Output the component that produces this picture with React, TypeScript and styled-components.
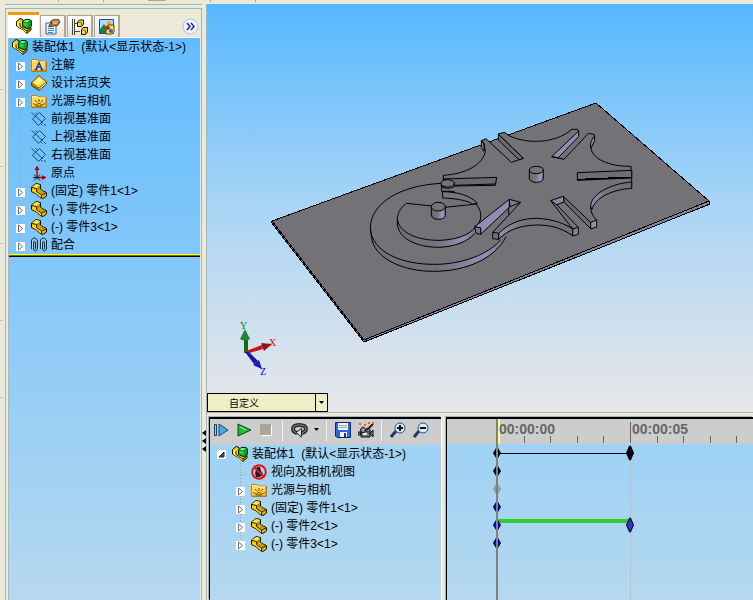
import React from "react";
import styled, { createGlobalStyle } from "styled-components";

const GlobalStyle = createGlobalStyle`
  * { box-sizing: border-box; }
  body {
    margin: 0;
    background: #ece9d8;
    color: #000;
    font: 12px/18px "Liberation Sans", "Noto Sans CJK SC", sans-serif;
  }
  button { padding: 0; border: 0; background: none; font: inherit; color: inherit; }
  svg { display: block; }
`;

/* ---------- layout ---------- */

const Window = styled.div`
  height: 100vh;
  display: flex;
  flex-direction: column;
  overflow: hidden;
`;

const TopStrip = styled.div`
  flex: 0 0 4px;
  display: flex;
  gap: 44px;
  padding-left: 58px;
`;

const StripMark = styled.i<{ $wide?: boolean }>`
  height: ${(p) => (p.$wide ? 1 : 2)}px;
  width: ${(p) => (p.$wide ? 18 : 1)}px;
  background: #aca899;
`;

const Body = styled.div`
  flex: 1;
  min-height: 0;
  display: flex;
`;

const Gutter = styled.div`
  flex: 0 0 5px;
  display: flex;
  flex-direction: column;
  gap: 76px;
  padding: 85px 2px 0 0;
`;

const GutterMark = styled.i`
  height: 1px;
  background: #c4c0b0;
`;

const SidePanel = styled.aside`
  flex: 0 0 197px;
  display: flex;
  flex-direction: column;
  border-top: 1px solid #9cb6ba;
  padding-top: 3px;
`;

const SideFrame = styled.div`
  flex: 1;
  display: flex;
  flex-direction: column;
  border: 1px solid #9cb6ba;
  border-bottom: 0;
  padding: 3px 1px 0 2px;
`;

const Tabs = styled.div`
  flex: 0 0 26px;
  display: flex;
  align-items: flex-end;
  gap: 1px;
  border-bottom: 1px solid #fff;
`;

const Tab = styled.button<{ $active?: boolean }>`
  width: ${(p) => (p.$active ? 31 : 26)}px;
  height: ${(p) => (p.$active ? 25 : 22)}px;
  display: flex;
  justify-content: center;
  align-items: center;
  background: ${(p) => (p.$active ? "#fff" : "linear-gradient(#fff, #e6e3d6)")};
  border: 1px solid #aca899;
  border-width: ${(p) => (p.$active ? "0" : "1px 2px 0 1px")};
  border-top: ${(p) => (p.$active ? "3px solid #ee9a10" : "1px solid #aca899")};
`;

const MoreButton = styled.button`
  margin: 0 1px 2px auto;
`;

const SideBody = styled.div`
  flex: 1;
  background: linear-gradient(#62bcff, #b6d8ef);
  border-left: 1px solid #a8b8c0;
`;

const Tree = styled.ul`
  list-style: none;
  margin: 0;
  padding: 0;
`;

const RollbackBar = styled.div`
  height: 3px;
  background: #776f00;
  border-top: 1px solid #ffff00;
  border-bottom: 1px solid #000;
`;

const Row = styled.li<{ $indent: number }>`
  height: 18px;
  display: flex;
  align-items: center;
  gap: 4px;
  padding-left: ${(p) => p.$indent}px;
  white-space: pre;
`;

const Branch = styled.div<{ $last?: boolean }>`
  align-self: stretch;
  width: 11px;
  display: flex;
  align-items: center;
  padding-top: 3px;
  background:
    repeating-linear-gradient(90deg, #a99d90 0 1px, transparent 1px 3px) 5px 11px / 10px 1px no-repeat,
    repeating-linear-gradient(#a99d90 0 1px, transparent 1px 3px) 4px 0 / 1px ${(p) => (p.$last ? "11px" : "18px")} no-repeat;
`;

const Expander = styled.button<{ $root?: boolean }>`
  width: 9px;
  height: 9px;
  margin-right: ${(p) => (p.$root ? 2 : 0)}px;
  background: #fff;
`;

const Splitter = styled.div`
  flex: 0 0 5px;
  display: flex;
  flex-direction: column;
  align-items: center;
  justify-content: flex-end;
  gap: 2px;
  padding-bottom: 148px;
  border-right: 1px solid #9cb6ba;
`;

const Main = styled.main`
  flex: 1;
  min-width: 0;
  display: flex;
  flex-direction: column;
`;

const Viewport = styled.section`
  flex: 1;
  min-height: 0;
  position: relative;
  background: linear-gradient(#56b8ff, #aad5f5 50%, #e8e7e8);
`;

const Scene = styled.svg`
  width: 100%;
  height: 100%;
`;

const ViewPicker = styled.label`
  position: absolute;
  left: 0;
  bottom: 0;
  display: flex;
  align-items: stretch;
  width: 121px;
  height: 19px;
  background: #efefc6;
  border: 1px solid #000;
  svg { border-left: 1px solid #000; }
`;

const Select = styled.select`
  flex: 1;
  appearance: none;
  border: 0;
  padding: 0 0 0 21px;
  background: transparent;
  color: #000;
  font: 10px/17px "Noto Sans CJK SC", sans-serif;
`;

const MotionPanel = styled.section`
  flex: 0 0 188px;
  display: flex;
  gap: 5px;
  padding-top: 2px;
  border-top: 1px solid #9cb6ba;
`;

const MotionPane = styled.div<{ $grow?: boolean }>`
  flex: ${(p) => (p.$grow ? "1 1 0" : "0 0 232px")};
  min-width: 0;
  display: flex;
  flex-direction: column;
  margin-top: 2px;
  margin-left: ${(p) => (p.$grow ? "0" : "2px")};
  border: 2px solid #000;
  border-width: 2px 0 0 1px;
  box-shadow: -1px -1px #9cb6ba, ${(p) => (p.$grow ? "-1px 0 #888" : "1px 0 #fff")};
  background: linear-gradient(#9bd1f5, #b5d8ef);
`;

const Toolbar = styled.div`
  flex: 0 0 26px;
  display: flex;
  align-items: center;
  background: #cdcdcd;
  padding: 0 0 4px 4px;
`;

const ToolButton = styled.button<{ $width?: number }>`
  width: ${(p) => p.$width ?? 23}px;
  height: 22px;
  display: flex;
  align-items: center;
`;

const Separator = styled.i`
  width: 1px;
  height: 21px;
  margin-right: 8px;
  background: #f2f2f2;
`;

const ChartText = styled.text`
  font: bold 14px "Liberation Sans", sans-serif;
  fill: #666;
`;

const AxisText = styled.text`
  font: 10px "Liberation Serif", serif;
`;

/* ---------- icons ---------- */

const Icon = styled.svg.attrs({ width: 16, height: 16, viewBox: "0 0 16 16" })`
  flex: none;
`;

const PartIcon = () => (
  <Icon>
    <path d="M0.500 4L5 0.500L9.500 1.500V6L11 7.500L15.500 9.500V13L12 15.500L9 14.500L5.500 11L0.500 8.500Z" fill="#e2b400" stroke="#171300" />
    <path d="M1 4L5 1L9 2L5.500 5Z" fill="#ffec52" />
    <path d="M6 5L9 2.500V6L6 8.500Z" fill="#b98800" />
    <path d="M1 5L5 6V8.500L10 12V14.500L6 11L1 8Z" fill="#ffcf00" />
    <path d="M1 4.500L5.500 5.500V8.500L10.500 12V15M10.500 12L15 10" fill="none" stroke="#2f2400" />
    <path d="M7 8.500L10 7.500L14 9.500L11 11Z" fill="#c99520" />
  </Icon>
);

const AssemblyIcon = () => (
  <Icon>
    <path d="M0.500 3.500L4 0.500L7 1.500V6L15 9.500V12L11 15.500L7 12L0.500 8Z" fill="#efcc22" stroke="#161200" />
    <path d="M1 4L4 5V8L10.500 12.500V15L6.500 11.500L1 8Z" fill="#fff43b" />
    <path d="M4 5V8.500L11 13V15M11 13L15 10" fill="none" stroke="#2f2600" />
    <path d="M6.500 4L9 1.500H14L15.500 3V8L12.500 11L6.500 8.500Z" fill="#0f9a2b" stroke="#04260a" />
    <path d="M7.500 4L9.500 2H13.500L12 4Z" fill="#5dff70" />
    <path d="M7.500 5H11.500V9L7.500 7.500Z" fill="#2fcf45" />
    <path d="M11 13.500L14.500 10.500V12L11.500 15Z" fill="#8b6c0b" />
  </Icon>
);

const Folder = () => (
  <>
    <path d="M0.500 2.500H6L7.500 4H15.500V14.500H0.500Z" fill="#ffd75a" stroke="#c08611" />
    <path d="M1.500 5V3.500H5.500L7 5H14.500" fill="none" stroke="#fff5a5" />
    <path d="M15 5V14H1" fill="none" stroke="#a86f07" />
  </>
);

const AnnotationIcon = () => (
  <Icon>
    <Folder />
    <path d="M5 12.500L8 5.500L11 12.500M6 10H10M3.500 12.500H6.500M9.500 12.500H12.500" fill="none" stroke="#123ca0" strokeWidth="1.400" />
  </Icon>
);

const LightsIcon = () => (
  <Icon>
    <Folder />
    <path d="M5.500 13A2.500 2.500 0 0 1 10.500 13Z" fill="#ffe500" stroke="#7a4300" />
    <path d="M8 6V9M4 7L6 9.500M12 7L10 9.500M2 10.500L5 12M14 10.500L11 12" stroke="#7a4300" />
  </Icon>
);

const BinderIcon = () => (
  <Icon>
    <path d="M0.500 8L8 0.500L15.500 7V9L8 15.500L0.500 10.500Z" fill="#b98000" stroke="#4d3700" />
    <path d="M0.500 8L8 0.500L15.500 7L8 13Z" fill="#ffd840" stroke="#8a6500" />
    <path d="M3 7.500L8 2.500L12 6L7 10Z" fill="#fff39b" />
    <path d="M8.500 14L15 8.500" stroke="#fff" />
  </Icon>
);

const PlaneIcon = () => (
  <Icon>
    <path d="M1.500 8L8.500 1.500L14.500 7.500L7.500 14.500ZM0.500 1.500L12 12M4.500 1.500L6 3M10 13L11.500 14.500M13 13L15 15" fill="none" stroke="#1d4a70" />
  </Icon>
);

const OriginIcon = () => (
  <Icon>
    <path d="M6 13V2M6 12.500H14" stroke="#b70000" strokeWidth="1.500" />
    <path d="M3.500 5L6 0.500L8.500 5ZM11 10V15L15.500 12.500Z" fill="#b70000" />
    <path d="M3 9.500L9 15.500M3 15.500L9 9.500M2 12.500H9" stroke="#1d1d28" />
  </Icon>
);

const MatesIcon = () => (
  <Icon>
    <g fill="none" stroke="#222a30">
      <path d="M0.500 12V3Q3 -1 6.500 3V12Q4 16 2.500 12V5Q4 3 4.500 6V12" />
      <path d="M9.500 12V3Q12 -1 15.500 3V12Q13 16 11.500 12V5Q13 3 13.500 6V12" />
    </g>
    <path d="M1.500 4V11M10.500 4V11" stroke="#c7d3da" />
  </Icon>
);

const NoViewIcon = () => (
  <Icon>
    <path d="M6 3L9 3L10 7L12 10L9 13H5L4 9Z" fill="#17202a" />
    <circle cx="8" cy="8" r="6.800" fill="none" stroke="#ec1111" strokeWidth="2" />
    <path d="M3 3L13 13" stroke="#ec1111" strokeWidth="2" />
  </Icon>
);

const PropertyIcon = () => (
  <Icon>
    <path d="M1 4H11V15H1Z" fill="#e5f3ff" stroke="#34679a" />
    <path d="M3 7.500H9M3 9.500H9M3 11.500H9M3 13.500H8" stroke="#3e82c4" />
    <path d="M5 3L9 0H13L15 3L12 7L8 6L5 8L4 6L7 4Z" fill="#bd7b4c" stroke="#653513" />
    <path d="M8 3H13M8 5L12 4" stroke="#f1c093" />
  </Icon>
);

const ConfigIcon = () => (
  <Icon>
    <path d="M0.500 0V16M2.500 0V16M3 4.500H6M3 12.500H8" stroke="#444" />
    <path d="M5.500 3L7.500 1H11.500V5L9.500 7.500H5.500ZM9.500 10.500L11 8.500H15.500V13L13.500 15.500H9.500Z" fill="#ffdc22" stroke="#161200" />
    <path d="M6 3.500H9.500V7M10 11H13.500V15" fill="none" stroke="#906900" />
  </Icon>
);

const AppearanceIcon = () => (
  <Icon>
    <path d="M0.500 0.500H14.500V14.500H0.500Z" fill="#a9dcff" stroke="#244b91" />
    <path d="M1 13V10L5 5L10 12V14H1Z" fill="#188641" />
    <circle cx="10" cy="4" r="2" fill="#ff9a12" />
    <path d="M7 8L9 6H15V13L13 15H7Z" fill="#ffe23a" stroke="#594400" />
    <circle cx="9" cy="9" r="2" fill="#df1515" />
    <circle cx="12" cy="12" r="2" fill="#2865db" />
  </Icon>
);

const icons = {
  part: PartIcon,
  assembly: AssemblyIcon,
  annotation: AnnotationIcon,
  lights: LightsIcon,
  binder: BinderIcon,
  plane: PlaneIcon,
  origin: OriginIcon,
  mates: MatesIcon,
  noView: NoViewIcon,
};

/* ---------- trees ---------- */

type Node = { icon: keyof typeof icons; label: string; leaf?: boolean };

const ROOT_LABEL = "装配体1  (默认<显示状态-1>)";

const designNodes: Node[] = [
  { icon: "annotation", label: "注解" },
  { icon: "binder", label: "设计活页夹" },
  { icon: "lights", label: "光源与相机" },
  { icon: "plane", label: "前视基准面", leaf: true },
  { icon: "plane", label: "上视基准面", leaf: true },
  { icon: "plane", label: "右视基准面", leaf: true },
  { icon: "origin", label: "原点", leaf: true },
  { icon: "part", label: "(固定) 零件1<1>" },
  { icon: "part", label: "(-) 零件2<1>" },
  { icon: "part", label: "(-) 零件3<1>" },
  { icon: "mates", label: "配合" },
];

const motionNodes: Node[] = [
  { icon: "noView", label: "视向及相机视图", leaf: true },
  { icon: "lights", label: "光源与相机" },
  { icon: "part", label: "(固定) 零件1<1>" },
  { icon: "part", label: "(-) 零件2<1>" },
  { icon: "part", label: "(-) 零件3<1>" },
];

const TreeRows = ({ nodes, indent }: { nodes: Node[]; indent: number }) => (
  <>
    {nodes.map((n, i) => {
      const Glyph = icons[n.icon];
      return (
        <Row key={i} $indent={indent} role="treeitem">
          <Branch $last={i === nodes.length - 1}>
            {!n.leaf && (
              <Expander aria-label={`展开 ${n.label}`}>
                <svg width="9" height="9">
                  <path d="M2.500 1L6.500 4.500L2.500 8Z" fill="#fff" stroke="#707070" />
                </svg>
              </Expander>
            )}
          </Branch>
          <Glyph />
          <span>{n.label}</span>
        </Row>
      );
    })}
  </>
);

/* ---------- 3D scene ---------- */

const Mechanism = () => (
  <Scene viewBox="207 4 546 408" preserveAspectRatio="xMidYMid meet" role="img" aria-label="槽轮机构">
    <defs>
      <linearGradient id="rim">
        <stop offset="0" stopColor="#707074" />
        <stop offset="0.500" stopColor="#737279" />
        <stop offset="0.850" stopColor="#9290b8" />
        <stop offset="1" stopColor="#757480" />
      </linearGradient>
      <linearGradient id="pin">
        <stop offset="0" stopColor="#68686c" />
        <stop offset="0.450" stopColor="#77767e" />
        <stop offset="0.800" stopColor="#9c9ac4" />
        <stop offset="1" stopColor="#78778a" />
      </linearGradient>
      <linearGradient id="arch">
        <stop offset="0" stopColor="#9290b8" />
        <stop offset="0.350" stopColor="#75747d" />
        <stop offset="1" stopColor="#706f73" />
      </linearGradient>
    </defs>
    <g shapeRendering="crispEdges" stroke="#000" strokeLinejoin="round">
      <path d="M272 221L364 340L709 201L710 204L364 342L271 222Z" fill="#85839a" />
      <path d="M272 221L596 103L709 201L364 340Z" fill="#737276" />
    </g>

    {/* driver disk with locking arc and crank pin */}
    <g transform="translate(260 90) scale(0.333333)" shapeRendering="crispEdges" stroke="#000" strokeWidth="3" fill="none" strokeLinejoin="round">
      <path d="M331 415C335 486 425 524 525 523C610 523 690 490 722 449L738 440C705 505 620 544 520 544C435 544 350 510 336 450Z" fill="url(#rim)" stroke="none" />
      <path d="M545 280C420 286 331 340 331 415C335 486 425 524 525 523C610 523 690 490 722 449" />
      <path d="M331 415L336 450C350 510 435 544 520 544C620 544 705 505 738 440" />
      <path d="M412 388C418 430 475 451 537 451C585 450 625 437 645 413V431C622 455 585 470 537 472C480 472 420 452 412 405Z" fill="url(#rim)" stroke="none" />
      <path d="M440 340C418 354 412 375 412 388C418 430 475 451 537 451C585 450 625 437 645 413M662 370C664 385 660 395 651 407M412 388V405C420 452 480 472 537 472C585 470 622 455 644 431" />
      <path d="M440 340L515 348M555 352L650 342" />
      <path d="M548 305C600 307 655 330 662 370" />
      <path d="M548 305V324C580 325 620 330 638 342L652 340C630 315 590 306 548 305Z" fill="#77767d" />
      <path d="M514 350V376C516 392 556 392 556 376V350Z" fill="url(#pin)" />
      <ellipse cx="535" cy="350" rx="21" ry="13" fill="#747377" />
      <path d="M550 267L710 262L706 286L583 288ZM583 286L706 282" fill="#6b6a6e" />
      <path d="M550 256V270M545 282V304H583" />
      <path d="M544 280V290Q563 300 583 290V280Z" fill="url(#pin)" />
      <ellipse cx="563" cy="280" rx="20" ry="11" fill="#747377" />
    </g>

    {/* six-slot Geneva wheel */}
    <g transform="translate(470 90) scale(0.333333)" shapeRendering="crispEdges" stroke="#000" strokeWidth="3" fill="none" strokeLinejoin="round">
      <path d="M34 152L48 146L88 184L60 200L46 184Z" fill="#737276" stroke="none" />
      <path d="M34 152L42 162V184L34 172Z" fill="#8886a2" />
      <path d="M-80 256C-10 252 40 222 46 184L42 160L34 152L48 146L124 217L160 205" />
      <path d="M85 132L160 205L147 209L85 150Z" fill="#6d6c70" />
      <path d="M85 132L103 127L117 137C170 163 255 160 300 122L306 118H322L326 123L200 190L130 176Z" fill="#737276" stroke="none" />
      <path d="M160 205L85 132L103 127L117 137C170 163 255 160 300 122L306 118H322L326 123" />
      <path d="M326 123V140L265 203L245 200Z" fill="#8f8db5" />
      <path d="M245 200L282 208L355 130L372 133L374 138" />
      <path d="M374 138V152L363 174Q357 158 374 138Z" fill="#8f8db5" />
      <path d="M363 174C366 205 415 230 483 229V240M485 240V295" />
      <path d="M322 248L485 241V264L322 271Z" fill="#6e6d70" />
      <path d="M322 269L485 262" strokeWidth="5" />
      <path d="M485 276C415 282 362 315 362 350L366 358C375 322 430 298 485 295Z" fill="url(#arch)" />
      <path d="M242 332L280 319L283 336L260 344Z" fill="#8a88aa" />
      <path d="M280 319L380 390L362 397V413L283 337Z" fill="#737276" stroke="none" />
      <path d="M280 319L362 397V416L283 337Z" fill="#6c6b6f" />
      <path d="M362 397L380 390V411L362 417Z" fill="#8f8db0" />
      <path d="M362 350Q362 374 380 390" />
      <path d="M242 332L308 417M260 344L325 412" />
      <path d="M308 417L325 412V433L308 438Z" fill="#85839e" />
      <path d="M86 430C120 396 160 385 200 385C255 387 290 405 308 417V437C270 411 235 405 200 405C145 407 115 420 86 447Z" fill="url(#arch)" />
      <path d="M152 337L68 427L86 430V448L68 446V427" />
      <path d="M118 328L14 410L32 414V433L118 352Z" fill="#8f8db5" />
      <path d="M118 328L152 337L120 350Z" fill="#7c7b88" />
      <path d="M14 410L32 414V433L18 430Z" fill="#77767d" />
      <path d="M116 352V374" />
      <path d="M178 240V266C182 281 216 281 220 266V240Z" fill="url(#pin)" />
      <ellipse cx="199" cy="240" rx="21" ry="11" fill="#747377" />
    </g>

    {/* orientation triad */}
    <path d="M244 336H248V353H244Z" fill="#146b1a" />
    <path d="M240 339L245 329L250 339Q245 342 240 339Z" fill="#218533" />
    <path d="M246 354L263 349L262 345L246 351Z" fill="#c51616" />
    <path d="M261 343L272 344L264 351Z" fill="#8f1717" />
    <path d="M245 352L249 352L258 361L254 364Z" fill="#1717a0" />
    <path d="M253 365L259 360L262 369Z" fill="#1616c9" />
    <AxisText x="240" y="329" fill="#087b18">Y</AxisText>
    <AxisText x="269" y="346" fill="#f00">X</AxisText>
    <AxisText x="260" y="375" fill="#00f">Z</AxisText>
  </Scene>
);

/* ---------- timeline ---------- */

const SECOND = 133 / 5;
const ticks = Array.from({ length: 60 }, (_, i) => i + 1);
const keys = [
  { x: 50, row: 0, fill: "#000" },
  { x: 50, row: 1, fill: "#000" },
  { x: 50, row: 2, fill: "#999" },
  { x: 50, row: 3, fill: "#00f" },
  { x: 50, row: 4, fill: "#00f" },
  { x: 50, row: 5, fill: "#00f" },
  { x: 183, row: 0, fill: "#000", tall: true },
  { x: 183, row: 4, fill: "#33c", tall: true },
];

const Timeline = () => (
  <svg width="100%" height="100%" role="img" aria-label="时间线" shapeRendering="crispEdges">
    <rect width="100%" height="25" fill="#cdcdcd" />
    {ticks.map((t) => {
      const x = Math.round(50 + t * SECOND);
      return <rect key={t} x={x} y={t % 5 ? 17 : 3} width="1" height={t % 5 ? 7 : 21} fill="#666" />;
    })}
    <rect x="51" width="2" height="25" fill="#ffff7c" />
    <ChartText x="52" y="15">00:00:00</ChartText>
    <ChartText x="185" y="15">00:00:05</ChartText>
    <rect x="183" y="25" width="1" height="100%" fill="#bfbfbf" />
    <rect x="50" y="34" width="133" height="1" fill="#000" />
    <rect x="50" y="100" width="133" height="4" fill="#3c3" />
    {keys.map((k, i) => {
      const y = 34 + k.row * 18;
      const h = k.tall ? 7 : 5;
      return (
        <path
          key={i}
          shapeRendering="auto"
          d={`M${k.x - 0.5} ${y - h}H${k.x + 0.5}L${k.x + 3.5} ${y}L${k.x + 0.5} ${y + h}H${k.x - 0.5}L${k.x - 3.5} ${y}Z`}
          fill={k.fill}
          stroke={k.fill === "#999" ? "#999" : "#000"}
        />
      );
    })}
    <rect x="49" width="2" height="100%" fill="#808080" />
  </svg>
);

/* ---------- page ---------- */

export default function App() {
  return (
    <Window>
      <GlobalStyle />
      <TopStrip>
        <StripMark />
        <StripMark />
        <StripMark $wide />
        <StripMark />
        <StripMark />
      </TopStrip>
      <Body>
        <Gutter>
          <GutterMark />
          <GutterMark />
          <GutterMark />
          <GutterMark />
          <GutterMark />
        </Gutter>
        <SidePanel>
          <SideFrame>
            <Tabs role="tablist">
              <Tab $active role="tab" aria-selected="true" aria-label="设计树"><AssemblyIcon /></Tab>
              <Tab role="tab" aria-label="属性"><PropertyIcon /></Tab>
              <Tab role="tab" aria-label="配置"><ConfigIcon /></Tab>
              <Tab role="tab" aria-label="外观"><AppearanceIcon /></Tab>
              <MoreButton aria-label="更多">
                <svg width="17" height="17">
                  <circle cx="8.500" cy="8.500" r="7.500" fill="#f1f4ff" stroke="#a9b9e8" />
                  <path d="M5 5L8 8.500L5 12M9 5L12 8.500L9 12" fill="none" stroke="#142c96" strokeWidth="1.500" />
                </svg>
              </MoreButton>
            </Tabs>
            <SideBody>
              <Tree role="tree">
                <Row $indent={3} role="treeitem">
                  <AssemblyIcon />
                  <span>{ROOT_LABEL}</span>
                </Row>
                <TreeRows nodes={designNodes} indent={7} />
              </Tree>
              <RollbackBar />
            </SideBody>
          </SideFrame>
        </SidePanel>
        <Splitter>
          {[0, 1, 2].map((i) => (
            <svg key={i} width="4" height="6"><path d="M4 0V6L0 3Z" /></svg>
          ))}
        </Splitter>
        <Main>
          <Viewport>
            <Mechanism />
            <ViewPicker>
              <Select aria-label="视图" defaultValue="custom">
                <option value="custom">自定义</option>
              </Select>
              <svg width="12" height="17"><path d="M3 7H8L5.500 10Z" /></svg>
            </ViewPicker>
          </Viewport>
          <MotionPanel>
            <MotionPane>
              <Toolbar role="toolbar">
                <ToolButton aria-label="计算">
                  <svg width="16" height="14"><path d="M0.500 1.500H2.500V12.500H0.500Z" fill="#9ccff2" stroke="#123b66" /><path d="M5 1L14 7L5 13Z" fill="#4da9e4" stroke="#17446e" /></svg>
                </ToolButton>
                <ToolButton aria-label="播放">
                  <svg width="16" height="14"><path d="M1 1L14 7L1 13Z" fill="#25b338" stroke="#084f12" /><path d="M3 4L9 7" stroke="#8aff8d" /></svg>
                </ToolButton>
                <ToolButton $width={22} aria-label="停止" disabled>
                  <svg width="12" height="12"><path d="M1 1H12V12H1Z" fill="#fff" /><path d="M0 0H11V11H0Z" fill="#aaa698" /></svg>
                </ToolButton>
                <Separator />
                <ToolButton $width={35} aria-label="播放模式">
                  <svg width="32" height="16">
                    <path d="M6 11Q2 10 2 7Q2 3 8 3Q15 3 15 7Q15 10 11 11" fill="none" stroke="#2c2c2c" strokeWidth="4" />
                    <path d="M6 11Q2 10 2 7Q2 3 8 3Q15 3 15 7Q15 10 11 11" fill="none" stroke="#8c8c8c" />
                    <path d="M10.500 6.500V15L5 10.500Z" fill="#ddd" stroke="#222" /><path d="M23 6H28L25.500 9Z" />
                  </svg>
                </ToolButton>
                <Separator />
                <ToolButton aria-label="保存">
                  <svg width="16" height="16"><path d="M0.500 0.500H15.500V15.500H2L0.500 14Z" fill="#256ae0" stroke="#102477" /><path d="M3 1H13V8H3ZM5 10H12V15H5Z" fill="#f2f4f8" /><path d="M4 3.500H12M4 5.500H12" stroke="#98a3b2" /><path d="M9 11H11V15H9Z" fill="#17347c" /></svg>
                </ToolButton>
                <ToolButton aria-label="动画向导">
                  <svg width="17" height="16"><path d="M3 8H12V15H3ZM12 11L15 8V15L12 12ZM0 10H3V13H0Z" fill="#777" stroke="#111" /><circle cx="5" cy="8" r="2.500" fill="#999" stroke="#111" /><circle cx="10" cy="8" r="2" fill="#ccc" stroke="#111" /><path d="M5 11H9V13H5Z" fill="#e8e8e8" /><path d="M9 8L15 2" stroke="#222" strokeWidth="2" /><path d="M1 1H3V3H1ZM6 2H8V4H6ZM10 0H12V2H10ZM14 0H16V2H14ZM4 4H5V5H4Z" fill="#ee611b" /></svg>
                </ToolButton>
                <Separator />
                <ToolButton aria-label="放大">
                  <svg width="16" height="16"><path d="M1 15L6 9" stroke="#1e3c64" strokeWidth="3" /><circle cx="10" cy="6" r="5" fill="#d8edfb" stroke="#244d7c" /><path d="M7 6H13M10 3V9" stroke="#111" strokeWidth="2" /></svg>
                </ToolButton>
                <ToolButton aria-label="缩小">
                  <svg width="16" height="16"><path d="M1 15L6 9" stroke="#1e3c64" strokeWidth="3" /><circle cx="10" cy="6" r="5" fill="#d8edfb" stroke="#244d7c" /><path d="M7 6H13" stroke="#111" strokeWidth="2" /></svg>
                </ToolButton>
              </Toolbar>
              <Tree role="tree">
                <Row $indent={7} role="treeitem">
                  <Expander $root aria-label="折叠 装配体1">
                    <svg width="9" height="9"><path d="M7 2V7H2Z" fill="#555" stroke="#222" /></svg>
                  </Expander>
                  <AssemblyIcon />
                  <span>{ROOT_LABEL}</span>
                </Row>
                <TreeRows nodes={motionNodes} indent={26} />
              </Tree>
            </MotionPane>
            <MotionPane $grow>
              <Timeline />
            </MotionPane>
          </MotionPanel>
        </Main>
      </Body>
    </Window>
  );
}
